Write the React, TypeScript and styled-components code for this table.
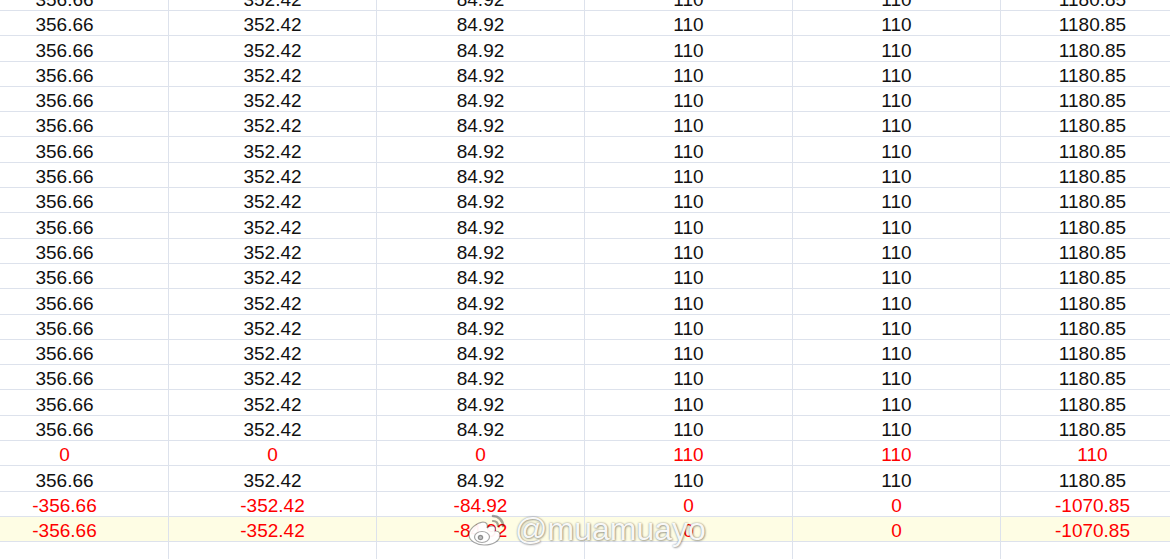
import React from "react";
import styled, { createGlobalStyle } from "styled-components";

const GlobalStyle = createGlobalStyle`
  html, body {
    margin: 0;
    padding: 0;
    background: #fff;
    overflow: hidden;
  }
  body {
    font-family: "Liberation Sans", Arial, sans-serif;
  }
`;

const Page = styled.div`
  position: relative;
  width: 1170px;
  height: 559px;
  overflow: hidden;
`;

const Sheet = styled.div`
  display: flex;
  flex-direction: column;
  margin: -14.3px 0 0 -39px;
`;

const Row = styled.div<{ $highlight?: boolean }>`
  display: grid;
  grid-template-columns: repeat(5, 208px) 184px;
  height: 25.3px;
  background: ${(p) => (p.$highlight ? "#fefde4" : "#fff")};
`;

const Cell = styled.div<{ $red?: boolean }>`
  box-sizing: border-box;
  display: flex;
  align-items: flex-end;
  justify-content: center;
  border-right: 1px solid #dde2ec;
  border-bottom: 1px solid #dde2ec;
  font-size: 19px;
  line-height: 1;
  padding-bottom: 1px;
  color: ${(p) => (p.$red ? "#ff0000" : "#111")};
`;

const Watermark = styled.div`
  position: absolute;
  left: 467px;
  top: 511px;
  display: flex;
  align-items: center;
  gap: 8px;
  pointer-events: none;
`;

const Handle = styled.span`
  font-family: "Liberation Sans", Arial, sans-serif;
  font-size: 32px;
  color: rgba(255, 255, 255, 0.95);
  text-shadow: 0 0 2px rgba(0, 0, 0, 0.45), 1px 1px 2px rgba(0, 0, 0, 0.25);
`;

type RowData = { values: string[]; red?: boolean; highlight?: boolean };

const normal = ["356.66", "352.42", "84.92", "110", "110", "1180.85"];

const rows: RowData[] = [
  ...Array.from({ length: 18 }, () => ({ values: normal })),
  { values: ["0", "0", "0", "110", "110", "110"], red: true },
  { values: normal },
  { values: ["-356.66", "-352.42", "-84.92", "0", "0", "-1070.85"], red: true },
  {
    values: ["-356.66", "-352.42", "-84.92", "0", "0", "-1070.85"],
    red: true,
    highlight: true,
  },
  { values: ["", "", "", "", "", ""] },
];

// weibo eye logo, white with a soft grey outline
const WeiboLogo = () => (
  <svg width="40" height="34" viewBox="0 0 40 34">
    <g stroke="rgba(0,0,0,0.35)" strokeWidth="1.2" fill="rgba(255,255,255,0.95)">
      <path d="M16 9c-7 1-14 7-14 13 0 6 8 10 15 10 9 0 16-4 16-10 0-3-3-4-5-4 1-3 0-5-3-5-2 0-4 1-5 2 1-3 0-6-4-6z" />
      <ellipse cx="15" cy="24" rx="7.5" ry="5.5" />
      <circle cx="13.5" cy="24.5" r="2.2" fill="rgba(0,0,0,0.25)" />
      <path d="M26 3c5 0 10 4 10 10" fill="none" strokeWidth="2.6" strokeLinecap="round" />
      <path d="M26 8c3 0 5 2 5 5" fill="none" strokeWidth="2.2" strokeLinecap="round" />
    </g>
  </svg>
);

export default function App() {
  return (
    <Page>
      <GlobalStyle />
      <Sheet>
        {rows.map((row, i) => (
          <Row key={i} $highlight={row.highlight}>
            {row.values.map((v, j) => (
              <Cell key={j} $red={row.red}>
                {v}
              </Cell>
            ))}
          </Row>
        ))}
      </Sheet>
      <Watermark>
        <WeiboLogo />
        <Handle>@muamuayo</Handle>
      </Watermark>
    </Page>
  );
}
